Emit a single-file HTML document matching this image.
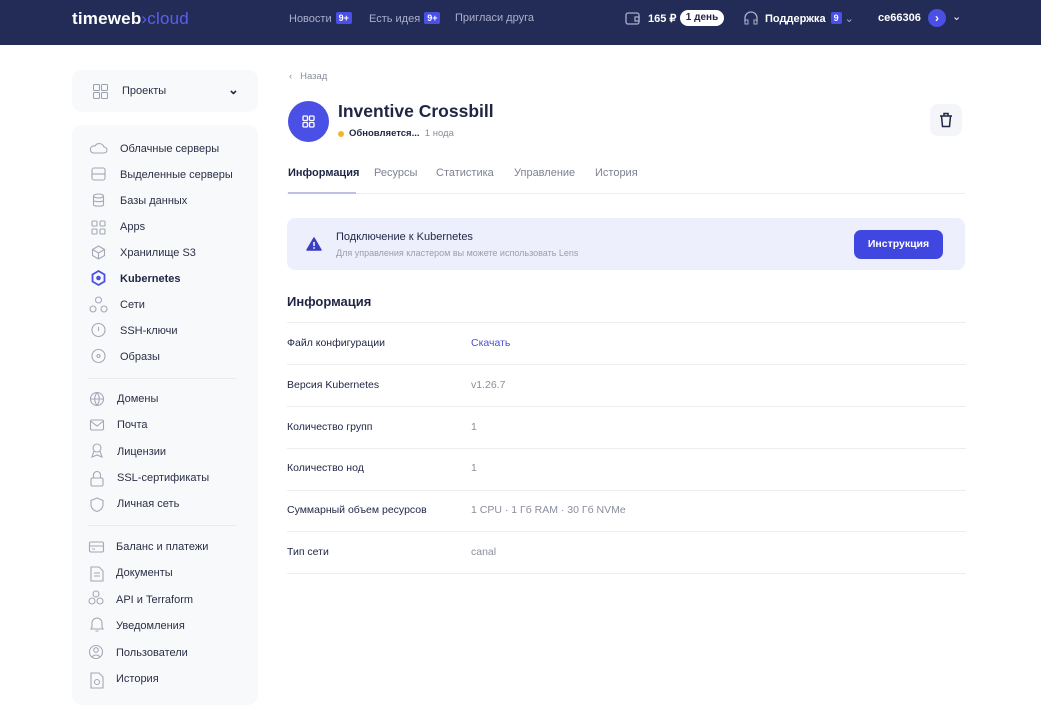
<!DOCTYPE html>
<html><head><meta charset="utf-8"><style>
*{box-sizing:border-box;margin:0;padding:0}
body{width:1041px;height:687px;overflow:hidden;background:#fff;font-family:"Liberation Sans","Noto Sans CJK SC",sans-serif;color:#1f2544;position:relative}
.hdr{position:absolute;left:0;top:0;width:1041px;height:45px;background:#232c56}
.t{position:absolute;white-space:nowrap}
.badge{display:inline-block;background:#4a4fe6;color:#fff;font-size:9px;font-weight:bold;padding:1px 3px;border-radius:2px;margin-left:4px;vertical-align:1px}
.hn{color:#aab0cc;font-size:11px;top:12px}
.side{position:absolute;left:72px;width:186px;background:#f8f9fb;border-radius:10px}
.it{position:absolute;left:120px;font-size:11px;color:#2a2f45}
.ic{position:absolute;left:92px;width:14px;height:14px}
.sep{position:absolute;left:88px;width:148px;height:1px;background:#e9ebf0}
.row{position:absolute;left:287px;width:679px;height:1px;background:#eceef2}
.lb{position:absolute;left:287px;font-size:10.5px;color:#1f2544}
.vl{position:absolute;left:471px;font-size:10.5px;color:#8a8e9c}
</style></head><body>
<div class="hdr"></div>
<div class="t" style="left:72px;top:9px;font-size:17px;font-weight:bold;color:#fff;letter-spacing:0.2px">timeweb<span style="color:#5a5ff0;font-weight:normal">›cloud</span></div>
<div class="t hn" style="left:289px">Новости<span class="badge">9+</span></div>
<div class="t hn" style="left:369px">Есть идея<span class="badge">9+</span></div>
<div class="t hn" style="left:455px">Пригласи друга</div>
<svg class="t" style="left:625px;top:11px" width="16" height="15" viewBox="0 0 16 15"><rect x="1" y="2" width="13" height="11" rx="2" fill="none" stroke="#aab0cc" stroke-width="1.3"/><path d="M10 6h4v4h-4z" fill="none" stroke="#aab0cc" stroke-width="1.2"/></svg>
<div class="t" style="left:648px;top:12px;font-size:11px;color:#fff;font-weight:bold">165 ₽</div>
<div class="t" style="left:680px;top:10px;width:44px;height:16px;background:#fff;border-radius:8px;font-size:10px;color:#1f2544;font-weight:bold;text-align:center;line-height:16px">1 день</div>
<svg class="t" style="left:743px;top:10px" width="16" height="16" viewBox="0 0 16 16"><path d="M2 12V8a6 6 0 0112 0v4" fill="none" stroke="#aab0cc" stroke-width="1.3"/><rect x="2" y="10" width="3" height="4" fill="none" stroke="#aab0cc"/><rect x="11" y="10" width="3" height="4" fill="none" stroke="#aab0cc"/></svg>
<div class="t" style="left:765px;top:12px;font-size:11px;color:#fff;font-weight:bold">Поддержка<span class="badge" style="margin-left:5px">9</span> <span style="color:#aab0cc;font-weight:normal">⌄</span></div>
<div class="t" style="left:878px;top:12px;font-size:11px;color:#fff;font-weight:bold">ce66306</div>
<div class="t" style="left:928px;top:9px;width:18px;height:18px;border-radius:9px;background:#4a4fe6;color:#fff;font-size:12px;font-weight:bold;text-align:center;line-height:18px">›</div>
<div class="t" style="left:952px;top:10px;color:#fff;font-size:11px">⌄</div>

<div class="side" style="top:70px;height:42px"></div>
<svg class="t" style="left:93px;top:84px" width="15" height="15" viewBox="0 0 15 15" fill="none" stroke="#9a9fae"><rect x=".5" y=".5" width="6" height="6" rx="1"/><rect x="8.5" y=".5" width="6" height="6" rx="1"/><rect x=".5" y="8.5" width="6" height="6" rx="1"/><rect x="8.5" y="8.5" width="6" height="6" rx="1"/></svg>
<div class="t it" style="left:122px;top:85px">Проекты</div>
<div class="t" style="left:228px;top:82px;font-size:13px;font-weight:bold">⌄</div>

<div class="side" style="top:125px;height:580px"></div>
<div class="t it" style="top:143px">Облачные серверы</div>
<div class="t it" style="top:169px">Выделенные серверы</div>
<div class="t it" style="top:195px">Базы данных</div>
<div class="t it" style="top:221px">Apps</div>
<div class="t it" style="top:247px">Хранилище S3</div>
<div class="t it" style="top:273px;font-weight:bold;color:#1f2544">Kubernetes</div>
<div class="t it" style="top:299px">Сети</div>
<div class="t it" style="top:325px">SSH-ключи</div>
<div class="t it" style="top:351px">Образы</div>
<div class="sep" style="top:378px"></div>
<div class="t it" style="left:117px;top:393px">Домены</div>
<div class="t it" style="left:117px;top:419px">Почта</div>
<div class="t it" style="left:117px;top:446px">Лицензии</div>
<div class="t it" style="left:117px;top:472px">SSL-сертификаты</div>
<div class="t it" style="left:117px;top:498px">Личная сеть</div>
<div class="sep" style="top:525px"></div>
<div class="t it" style="left:116px;top:541px">Баланс и платежи</div>
<div class="t it" style="left:116px;top:567px">Документы</div>
<div class="t it" style="left:116px;top:594px">API и Terraform</div>
<div class="t it" style="left:116px;top:620px">Уведомления</div>
<div class="t it" style="left:116px;top:647px">Пользователи</div>
<div class="t it" style="left:116px;top:673px">История</div>
<svg class="t" style="left:88px;top:140px" width="22" height="550" viewBox="0 0 22 550" fill="none" stroke="#a4a8b6" stroke-width="1.1">
<path d="M5 13h11a3 3 0 000-6 5 5 0 00-9-1 3.5 3.5 0 00-2 7z"/>
<rect x="4" y="28" width="13" height="12" rx="2"/><path d="M4 34h13"/>
<ellipse cx="10.5" cy="56" rx="5" ry="2"/><path d="M5.5 56v9c0 1.5 10 1.5 10 0v-9M5.5 60.5c0 1.5 10 1.5 10 0"/>
<rect x="4" y="81" width="5" height="5" rx="1"/><rect x="12" y="81" width="5" height="5" rx="1"/><rect x="4" y="89" width="5" height="5" rx="1"/><rect x="12" y="89" width="5" height="5" rx="1"/>
<path d="M10.5 106l6 3.5v6l-6 3.5-6-3.5v-6zM4.5 109.5l6 3.5 6-3.5M10.5 113v6"/>
<path d="M10.5 131l6 3.5v7l-6 3.5-6-3.5v-7z" stroke="#4a4fe6" stroke-width="1.8"/><circle cx="10.5" cy="138" r="2.3" fill="#4a4fe6" stroke="none"/>
<circle cx="10.5" cy="160" r="3"/><circle cx="5" cy="169" r="3"/><circle cx="16" cy="169" r="3"/>
<circle cx="10.5" cy="190" r="6.5"/><path d="M10.5 187v4"/>
<circle cx="10.5" cy="216" r="6.5"/><circle cx="10.5" cy="216" r="1.5"/>
<circle cx="9" cy="259" r="6.5"/><path d="M2.5 259h13M9 252.5c-3 4-3 9 0 13M9 252.5c3 4 3 9 0 13"/>
<rect x="2.5" y="280" width="13" height="10" rx="1.5"/><path d="M2.5 281l6.5 5 6.5-5"/>
<circle cx="9" cy="308" r="4"/><path d="M6 311l-2 6 5-2 5 2-2-6"/>
<rect x="3" y="338" width="12" height="8" rx="1.5"/><path d="M5.5 338v-3a3.5 3.5 0 017 0v3"/>
<path d="M9 358l6 2.5v4c0 4-3 6-6 7-3-1-6-3-6-7v-4z"/>
<rect x="1.5" y="402" width="14" height="10" rx="1.5"/><path d="M1.5 406h14M4 409h3"/>
<path d="M3 427h8l4 4v10H3zM6 433h6M6 436h6"/>
<circle cx="8" cy="454" r="3"/><circle cx="4" cy="461" r="3"/><circle cx="12" cy="461" r="3"/>
<path d="M4 487v-4a5 5 0 0110 0v4l1 2H3zM7.5 491h3"/>
<circle cx="8" cy="512" r="6.5"/><circle cx="8" cy="510" r="2.3"/><path d="M4 517a5 5 0 018 0"/>
<path d="M3 533h8l4 4v11H3z"/><circle cx="9" cy="542" r="2.5"/>
</svg>

<div class="t" style="left:289px;top:71px;font-size:9.5px;color:#8a8e9c">‹&nbsp;&nbsp; Назад</div>
<div class="t" style="left:288px;top:101px;width:41px;height:41px;border-radius:21px;background:#4a4fe6"></div>
<svg class="t" style="left:302px;top:115px" width="13" height="13" viewBox="0 0 13 13" fill="none" stroke="#fff" stroke-width="1.3"><rect x="1" y="1" width="4.5" height="4.5" rx="1"/><rect x="7.5" y="1" width="4.5" height="4.5" rx="1"/><rect x="1" y="7.5" width="4.5" height="4.5" rx="1"/><rect x="7.5" y="7.5" width="4.5" height="4.5" rx="1"/></svg>
<div class="t" style="left:338px;top:101px;font-size:17.5px;font-weight:bold;color:#1f2544">Inventive Crossbill</div>
<div class="t" style="left:338px;top:131px;width:6px;height:6px;border-radius:3px;background:#f2b627"></div>
<div class="t" style="left:349px;top:128px;font-size:9.5px;font-weight:bold">Обновляется... <span style="font-weight:normal;color:#8a8e9c">&nbsp;1 нода</span></div>
<div class="t" style="left:930px;top:104px;width:32px;height:32px;border-radius:8px;background:#f4f5f8"></div>
<svg class="t" style="left:939px;top:112px" width="14" height="16" viewBox="0 0 14 16" fill="none" stroke="#1f2544" stroke-width="1.5"><path d="M1 4h12M5 4V1.5h4V4M2.5 4l1 10.5h7L11.5 4"/></svg>

<div class="t" style="left:288px;top:167px;font-size:11px;font-weight:bold">Информация</div>
<div class="t" style="left:374px;top:167px;font-size:11px;color:#7d8193">Ресурсы</div>
<div class="t" style="left:436px;top:167px;font-size:11px;color:#7d8193">Статистика</div>
<div class="t" style="left:514px;top:167px;font-size:11px;color:#7d8193">Управление</div>
<div class="t" style="left:595px;top:167px;font-size:11px;color:#7d8193">История</div>
<div class="row" style="top:193px;left:287px;width:678px"></div>
<div class="t" style="left:288px;top:192px;width:68px;height:2px;background:#bdbfe8"></div>

<div class="t" style="left:287px;top:218px;width:678px;height:52px;border-radius:8px;background:#eeeffd"></div>
<svg class="t" style="left:306px;top:237px" width="16" height="14" viewBox="0 0 16 14"><path d="M8 1L15 13H1z" fill="#3b3fc4" stroke="#3b3fc4" stroke-linejoin="round" stroke-width="1.5"/><path d="M8 5v4" stroke="#fff" stroke-width="1.5"/><circle cx="8" cy="11" r=".9" fill="#fff"/></svg>
<div class="t" style="left:336px;top:231px;font-size:11px;color:#1f2544">Подключение к Kubernetes</div>
<div class="t" style="left:336px;top:248px;font-size:9px;color:#9a9eae">Для управления кластером вы можете использовать Lens</div>
<div class="t" style="left:854px;top:230px;width:89px;height:29px;border-radius:7px;background:#4046e0;color:#fff;font-size:10.5px;font-weight:bold;text-align:center;line-height:29px">Инструкция</div>

<div class="t" style="left:287px;top:294px;font-size:13px;font-weight:bold">Информация</div>
<div class="row" style="top:322px"></div>
<div class="lb t" style="top:337px">Файл конфигурации</div><div class="vl t" style="top:337px;color:#4a4fd6">Скачать</div>
<div class="row" style="top:364px"></div>
<div class="lb t" style="top:379px">Версия Kubernetes</div><div class="vl t" style="top:379px">v1.26.7</div>
<div class="row" style="top:406px"></div>
<div class="lb t" style="top:421px">Количество групп</div><div class="vl t" style="top:421px">1</div>
<div class="row" style="top:448px"></div>
<div class="lb t" style="top:462px">Количество нод</div><div class="vl t" style="top:462px">1</div>
<div class="row" style="top:490px"></div>
<div class="lb t" style="top:504px">Суммарный объем ресурсов</div><div class="vl t" style="top:504px">1 CPU · 1 Гб RAM · 30 Гб NVMe</div>
<div class="row" style="top:531px"></div>
<div class="lb t" style="top:546px">Тип сети</div><div class="vl t" style="top:546px">canal</div>
<div class="row" style="top:573px"></div>
</body></html>
